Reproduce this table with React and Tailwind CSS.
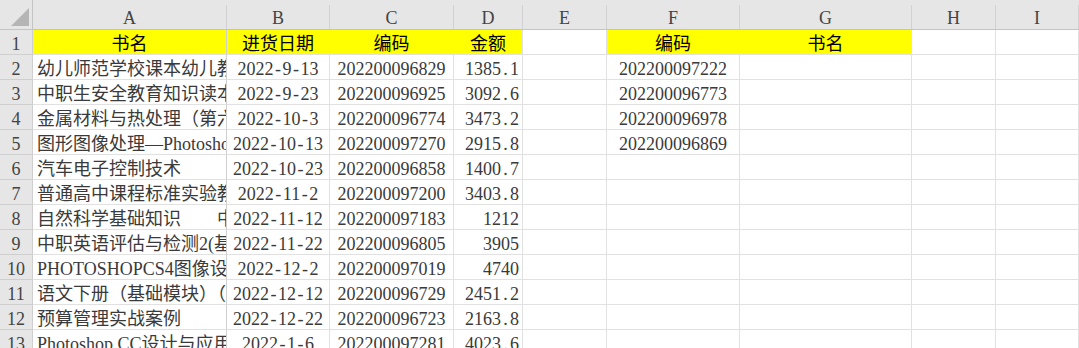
import React from 'react';

const cols = ['A', 'B', 'C', 'D', 'E', 'F', 'G', 'H', 'I'];

const rows = [
  ['幼儿师范学校课本幼儿教育学', '2022-9-13', '202200096829', '1385.1', '202200097222'],
  ['中职生安全教育知识读本', '2022-9-23', '202200096925', '3092.6', '202200096773'],
  ['金属材料与热处理（第六版）', '2022-10-3', '202200096774', '3473.2', '202200096978'],
  ['图形图像处理—Photoshop CS6', '2022-10-13', '202200097270', '2915.8', '202200096869'],
  ['汽车电子控制技术', '2022-10-23', '202200096858', '1400.7', ''],
  ['普通高中课程标准实验教科书', '2022-11-2', '202200097200', '3403.8', ''],
  ['自然科学基础知识\u3000\u3000中职', '2022-11-12', '202200097183', '1212', ''],
  ['中职英语评估与检测2(基础模块)', '2022-11-22', '202200096805', '3905', ''],
  ['PHOTOSHOPCS4图像设计与制作', '2022-12-2', '202200097019', '4740', ''],
  ['语文下册（基础模块）（第三版）', '2022-12-12', '202200096729', '2451.2', ''],
  ['预算管理实战案例', '2022-12-22', '202200096723', '2163.8', ''],
  ['Photoshop CC设计与应用任务教程', '2022-1-6', '202200097281', '4023.6', ''],
];

const font = "font-['Liberation_Serif','Noto_Sans_CJK_SC',serif]";

const Half = ({ text }) => (
  <>
    {text.split(/([.-])/).map((p, i) =>
      p === '.' || p === '-' ? (
        <span key={i} className="inline-block w-[9px] text-center">
          {p}
        </span>
      ) : (
        <React.Fragment key={i}>{p}</React.Fragment>
      )
    )}
  </>
);

const Cell = ({ children, className = '' }) => (
  <div
    className={`h-[25px] flex items-center overflow-hidden whitespace-pre border-b border-r border-[#e1e1e1] pt-[3px] ${className}`}
  >
    {children}
  </div>
);

const RowNum = ({ n }) => (
  <div className="h-[25px] flex items-center justify-center bg-[#e6e6e6] border-b border-r border-[#cfcfcf] text-[#444] pt-[3px]">
    {n}
  </div>
);

export default function App() {
  return (
    <div className={`w-[1079px] h-[348px] overflow-hidden bg-white text-[18px] leading-none text-[#3a3a3a] ${font}`}>
      <div className="grid grid-cols-[33px_194px_103px_124px_69px_84px_133px_172px_84px_1fr]">
        {/* column header row */}
        <div className="h-[30px] bg-[#e6e6e6] border-b border-r border-[#c4c4c4] flex items-end justify-end pr-[3px] pb-[3px]">
          <svg width="18" height="18" viewBox="0 0 18 18">
            <polygon points="18,0 18,18 0,18" fill="#b5b5b5" />
          </svg>
        </div>
        {cols.map((c) => (
          <div key={c} className="h-[30px] bg-[#e6e6e6] border-b border-[#c4c4c4] pt-[5px]">
            <div className="h-full flex items-center justify-center border-r border-[#d2d2d2] text-[#444] pt-[2px]">
              {c}
            </div>
          </div>
        ))}

        {/* row 1 */}
        <RowNum n={1} />
        <Cell className="bg-[#ffff00] !border-r-[#d0d0d0] justify-center text-black">书名</Cell>
        <Cell className="bg-[#ffff00] !border-r-[#ffff00] justify-center text-black">进货日期</Cell>
        <Cell className="bg-[#ffff00] !border-r-[#ffff00] justify-center text-black">编码</Cell>
        <Cell className="bg-[#ffff00] justify-center text-black">金额</Cell>
        <Cell />
        <Cell className="bg-[#ffff00] !border-r-[#ffff00] justify-center text-black">编码</Cell>
        <Cell className="bg-[#ffff00] justify-center text-black">书名</Cell>
        <Cell />
        <Cell />

        {rows.map((r, i) => (
          <React.Fragment key={i}>
            <RowNum n={i + 2} />
            <Cell className="pl-[4px] !border-r-[#d0d0d0]">{r[0]}</Cell>
            <Cell className="justify-center"><Half text={r[1]} /></Cell>
            <Cell className="justify-center">{r[2]}</Cell>
            <Cell className="justify-end pr-[3px]"><Half text={r[3]} /></Cell>
            <Cell />
            <Cell className="justify-center">{r[4]}</Cell>
            <Cell />
            <Cell />
            <Cell />
          </React.Fragment>
        ))}
      </div>
    </div>
  );
}
